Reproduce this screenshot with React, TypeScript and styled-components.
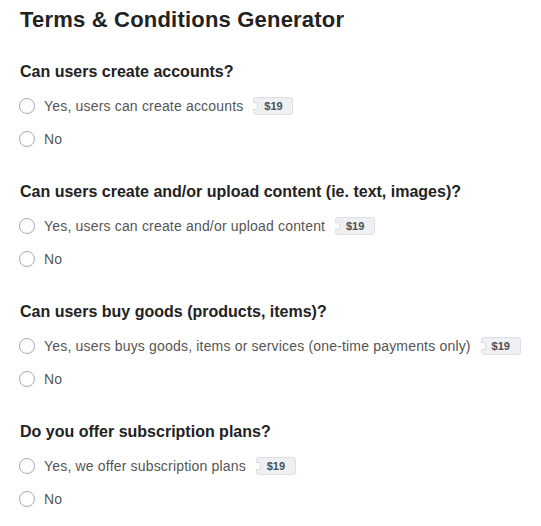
import { createGlobalStyle, styled } from "styled-components";

const GlobalStyle = createGlobalStyle`
    body {
        margin: 0;
        background: #fff;
        font-family: "Liberation Sans", Arial, sans-serif;
    }
`

type Option = { label: string; price?: string };
type Question = { title: string; options: Option[] };

const questions: Question[] = [
    {
        title: "Can users create accounts?",
        options: [{ label: "Yes, users can create accounts", price: "$19" }, { label: "No" }],
    },
    {
        title: "Can users create and/or upload content (ie. text, images)?",
        options: [{ label: "Yes, users can create and/or upload content", price: "$19" }, { label: "No" }],
    },
    {
        title: "Can users buy goods (products, items)?",
        options: [
            { label: "Yes, users buys goods, items or services (one-time payments only)", price: "$19" },
            { label: "No" },
        ],
    },
    {
        title: "Do you offer subscription plans?",
        options: [{ label: "Yes, we offer subscription plans", price: "$19" }, { label: "No" }],
    },
];

export default function App() {
    return (
        <>
            <GlobalStyle />
            <StyledPage>
                <StyledTitle>Terms &amp; Conditions Generator</StyledTitle>
                {questions.map((q) => (
                    <StyledSection key={q.title}>
                        <StyledQuestion>{q.title}</StyledQuestion>
                        {q.options.map((o) => (
                            <StyledOption key={o.label}>
                                <StyledRadio type="radio" name={q.title} />
                                <span>{o.label}</span>
                                {o.price && <StyledPrice>{o.price}</StyledPrice>}
                            </StyledOption>
                        ))}
                    </StyledSection>
                ))}
            </StyledPage>
        </>
    )
}

const StyledPage = styled.main`
    padding: 7px 20px 0;
`

const StyledTitle = styled.h1`
    margin: 0 0 2px;
    font-size: 22px;
    line-height: 26px;
    font-weight: 700;
    letter-spacing: 0.2px;
    color: #222;
`

const StyledSection = styled.section`
    padding-top: 27px;
`

const StyledQuestion = styled.h2`
    margin: 0 0 7px;
    font-size: 16px;
    line-height: 20px;
    font-weight: 700;
    color: #222;
`

const StyledOption = styled.label`
    display: flex;
    align-items: center;
    height: 33px;
    font-size: 14px;
    letter-spacing: 0.18px;
    color: #555;
`

const StyledRadio = styled.input`
    appearance: none;
    width: 16px;
    height: 16px;
    margin: 0 9px 0 -1px;
    border: 1px solid #a7abb1;
    border-radius: 50%;
    background: #fff;
`

const StyledPrice = styled.span`
    position: relative;
    display: inline-flex;
    align-items: center;
    justify-content: center;
    box-sizing: border-box;
    width: 40px;
    height: 18px;
    margin-left: 10px;
    border: 1px solid #dcdfe3;
    border-radius: 3px;
    background: #eef0f3;
    color: #4a5058;
    font-size: 11px;
    font-weight: 700;
    letter-spacing: 0;

    &::before {
        content: "";
        position: absolute;
        left: -1px;
        top: 50%;
        width: 4px;
        height: 6px;
        margin-top: -4px;
        border: 1px solid #dcdfe3;
        border-left: none;
        border-radius: 0 3px 3px 0;
        background: #fff;
    }
`
